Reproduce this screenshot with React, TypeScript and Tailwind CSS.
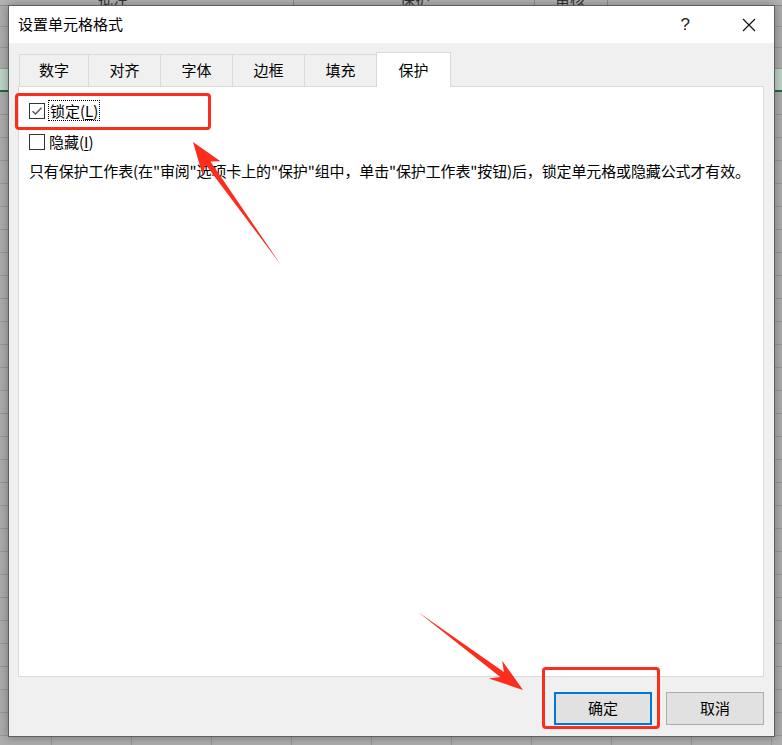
import React from "react";

const font = { fontFamily: '"Noto Sans CJK SC", "Noto Sans", sans-serif' };

function SheetBackground() {
  const rows = Array.from({ length: 32 });
  const cols = Array.from({ length: 10 });
  return (
    <div className="absolute inset-0 overflow-hidden bg-[#adadad]">
      {/* top header strip */}
      <div className="relative flex h-[6px] border-b border-[#8e8e8e] bg-[#b4b4b4] text-[15px] leading-none text-[#333]">
        <div className="w-[294px] shrink-0 border-r border-[#8e8e8e] pl-[98px] -mt-[9px]">批注</div>
        <div className="w-[241px] shrink-0 border-r border-[#8e8e8e] pl-[106px] -mt-[9px]">保护</div>
        <div className="w-[73px] shrink-0 border-r border-[#8e8e8e] pl-[20px] -mt-[9px]">审核</div>
        <div className="flex-1" />
      </div>
      <div className="flex h-[62px] flex-col">
        {Array.from({ length: 3 }).map((_, i) => (
          <div key={i} className="flex h-[21px] shrink-0 border-b border-[#999]">
            <div className="w-[52px] shrink-0 border-r border-[#999]" />
          </div>
        ))}
      </div>
      <div className="flex h-[24px] border-b-[2px] border-[#1f6a40] bg-[#bfd6c8]" />
      {rows.map((_, i) => (
        <div key={i} className="flex h-[23px] shrink-0 border-b border-[#979797]">
          <div className="w-[52px] shrink-0 border-r border-[#979797]" />
          {cols.map((__, j) => (
            <div key={j} className="w-[80px] shrink-0 border-r border-[#979797]" />
          ))}
        </div>
      ))}
    </div>
  );
}

function Tab({ label, w, active }: { label: string; w: string; active?: boolean }) {
  if (active) {
    return (
      <div
        className={`${w} relative z-10 -mb-px flex h-[35px] shrink-0 items-center justify-center border border-b-0 border-[#d9d9d9] bg-white text-[15px] text-black`}
      >
        {label}
      </div>
    );
  }
  return (
    <div
      className={`${w} flex h-[32px] shrink-0 items-center justify-center border-l border-t border-[#d9d9d9] text-[15px] text-black`}
    >
      {label}
    </div>
  );
}

function CheckBox({ checked }: { checked?: boolean }) {
  return (
    <div className="flex h-[16px] w-[16px] shrink-0 items-center justify-center border border-[#333] bg-white">
      {checked && (
        <svg width="12" height="10" viewBox="0 0 12 10">
          <path d="M1.5 5.2 L4.5 8 L10.5 1.8" fill="none" stroke="#555" strokeWidth="1.4" />
        </svg>
      )}
    </div>
  );
}

function Arrows() {
  return (
    <svg className="pointer-events-none absolute left-0 top-0" width="782" height="745" viewBox="0 0 782 745">
      <polygon
        points="281,265 210.5,161.4 220.5,161.2 193,142 202.5,174.8 205.7,164.8"
        fill="#fb2d1d"
      />
      <polygon
        points="418,612 503.9,672.1 502.2,660.7 523,690 488.8,678.4 500.3,676.9"
        fill="#fb2d1d"
      />
    </svg>
  );
}

export default function App() {
  return (
    <div className="relative h-[745px] w-[782px] overflow-hidden" style={font}>
      <SheetBackground />
      <div className="absolute left-[8px] top-[5px] flex h-[732px] w-[767px] flex-col border border-[#5f5f5f] bg-[#f0f0f0] shadow-[0_0_10px_rgba(0,0,0,0.35)]">
        {/* title bar */}
        <div className="flex h-[37px] shrink-0 items-center bg-white pl-[9px] pr-[18px]">
          <span className="text-[15px] text-black">设置单元格格式</span>
          <div className="flex-1" />
          <span className="mr-[52px] text-[17px] text-[#222]" style={{ fontFamily: '"Liberation Sans", sans-serif' }}>?</span>
          <svg width="14" height="14" viewBox="0 0 14 14">
            <path d="M1 1 L13 13 M13 1 L1 13" stroke="#111" strokeWidth="1.2" />
          </svg>
        </div>
        {/* body */}
        <div className="flex flex-1 flex-col pl-[9px] pr-[10px] pt-[9px]">
          <div className="flex items-end pl-px">
            <Tab label="数字" w="w-[69px]" />
            <Tab label="对齐" w="w-[72px]" />
            <Tab label="字体" w="w-[72px]" />
            <Tab label="边框" w="w-[72px]" />
            <Tab label="填充" w="w-[72px]" />
            <Tab label="保护" w="w-[75px]" active />
          </div>
          <div className="flex h-[591px] w-[746px] flex-col border border-[#d9d9d9] bg-white pl-[10px] pt-[13px] text-[15px] text-black">
            <div className="flex h-[21px] items-center">
              <CheckBox checked />
              <span className="ml-[3px] flex h-[21px] items-center border border-dotted border-black px-px leading-none">
                锁定(<span className="underline underline-offset-2">L</span>)
              </span>
            </div>
            <div className="mt-[10px] flex h-[21px] items-center">
              <CheckBox />
              <span className="ml-[4px] leading-none">
                隐藏(<span className="underline underline-offset-2">I</span>)
              </span>
            </div>
            <div className="mt-[8px] whitespace-nowrap leading-[21px] tracking-[-0.13px]">
              只有保护工作表(在"审阅"选项卡上的"保护"组中，单击"保护工作表"按钮)后，锁定单元格或隐藏公式才有效。
            </div>
          </div>
          <div className="mt-[15px] flex justify-end gap-[14px]">
            <button className="flex h-[33px] w-[98px] items-center justify-center border-2 border-[#0078d7] bg-[#e1e1e1] text-[15px] text-black">
              确定
            </button>
            <button className="flex h-[33px] w-[98px] items-center justify-center border border-[#adadad] bg-[#e1e1e1] text-[15px] text-black">
              取消
            </button>
          </div>
        </div>
      </div>
      {/* annotations */}
      <div className="pointer-events-none absolute left-[15px] top-[93px] h-[37px] w-[196px] rounded-[4px] border-[3px] border-[#fb2d1d]" />
      <div className="pointer-events-none absolute left-[542px] top-[667px] h-[62px] w-[118px] rounded-[4px] border-[3px] border-[#fb2d1d]" />
      <Arrows />
    </div>
  );
}
